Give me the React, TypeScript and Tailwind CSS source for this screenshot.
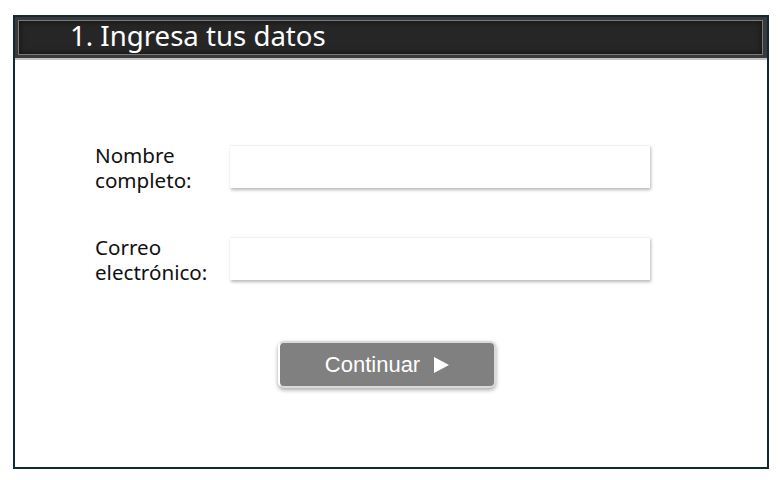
import React from "react";

function Field({ label1, label2, mt }: { label1: string; label2: string; mt: string }) {
  return (
    <div className={`flex items-start ${mt}`}>
      <div className="w-[135px] pl-[80px] box-content -mt-[2px] text-[20.6px] leading-[25px] text-[#111]">
        <div className="whitespace-nowrap">{label1}</div>
        <div className="whitespace-nowrap">{label2}</div>
      </div>
      <div className="w-[420px] h-[43px] bg-white border-t border-[#f0f0f0] shadow-[1px_2px_3px_rgba(0,0,0,0.28)]" />
    </div>
  );
}

export default function App() {
  return (
    <div className="w-[780px] h-[480px] bg-white pt-[15px] pl-[13px]" style={{ fontFamily: '"Noto Sans", "Open Sans", sans-serif' }}>
      <div className="w-[756px] h-[454px] border-2 border-[#0f2a35] flex flex-col">
        <div className="h-[41px] bg-[#3a3a3a] pt-[3px] pl-[3px] pr-[4px] pb-[3px]">
          <div className="h-full border border-[#7a7a7a] bg-[#262626] shadow-[inset_0_0_6px_rgba(0,0,0,0.6)] flex items-center pl-[51px]">
            <span className="text-white text-[27.6px] leading-none -mt-[3px]">1. Ingresa tus datos</span>
          </div>
        </div>
        <div className="h-[2px] bg-[#c4c4c4]" />
        <Field label1="Nombre" label2="completo:" mt="mt-[85px]" />
        <Field label1="Correo" label2="electrónico:" mt="mt-[44px]" />
        <div className="pl-[263px] mt-[56px]">
          <button className="w-[218px] h-[47px] rounded-[6px] border-2 border-[#dadada] border-l-white shadow-[0_2px_4px_rgba(0,0,0,0.35)] bg-[#808080] flex items-center justify-center gap-[13px] text-white text-[22px]" style={{ fontFamily: '"Liberation Sans", Arial, sans-serif' }}>
            <span className="-mt-[1px]">Continuar</span>
            <svg width="16" height="16" viewBox="0 0 16 16"><path d="M1 0 L16 8 L1 16 Z" fill="white" /></svg>
          </button>
        </div>
      </div>
    </div>
  );
}
